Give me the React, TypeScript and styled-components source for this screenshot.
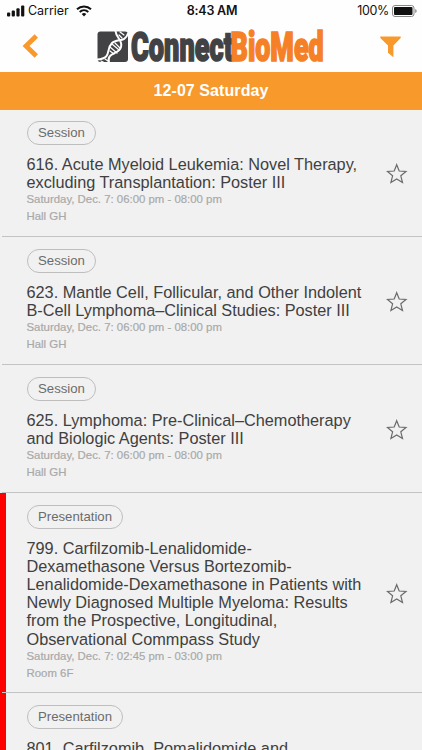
import React from 'react';
import styled, { createGlobalStyle } from 'styled-components';

const GlobalStyle = createGlobalStyle`
  * { box-sizing: border-box; }
  body { margin: 0; background: #f1f1f1; overflow: hidden; font-family: "Liberation Sans", Arial, sans-serif; }
`;
const Screen = styled.main`
  width: 422px; height: 750px; overflow: hidden; background: #f1f1f1;
`;
const StatusBar = styled.div`
  height: 22px; display: grid; grid-template-columns: 1fr auto 1fr; align-items: center;
  padding: 0 5px 0 7px; background: #fefefe; color: #111;
  font: 12.5px/22px Inter, sans-serif;
`;
const StatusLeft = styled.div`
  display: flex; align-items: center; gap: 3px; letter-spacing: -0.05px;
`;
const StatusRight = styled(StatusLeft)`
  justify-content: flex-end; letter-spacing: -0.35px;
`;
const Clock = styled.time`
  font-weight: 600; font-size: 12.5px; letter-spacing: -0.2px;
`;
const Wifi = styled.svg`margin-left: 4px;`;
const Header = styled.header`
  height: 50px; display: flex; align-items: center; background: #fefefe;
  padding: 0 20px 2px 22px;
`;
const HeaderButton = styled.button`
  border: 0; padding: 0; background: none; width: 22px; height: 30px; display: flex; align-items: center;
`;
const Logo = styled.svg`margin: 0 auto 0 51px; display: block; overflow: visible;`;
const DateBar = styled.div`
  height: 37px; background: #f8992b; color: #fff; box-shadow: 0 1px #c3a57e; position: relative; z-index: 1;
  text-align: center; font-size: 16px; font-weight: 700; line-height: 37px; letter-spacing: 0.08px;
`;
const Row = styled.article<{ $marked?: boolean; $height: number }>`
  height: ${p => p.$height}px; display: flex; align-items: center; position: relative;
  padding: 0 14px 0 26.5px;
  &::before {
    content: ''; position: absolute; left: 0; top: 0; bottom: 0; width: 6.4px;
    background: ${p => (p.$marked ? '#fe0000' : 'transparent')};
  }
  &::after {
    content: ''; position: absolute; left: 2px; right: 0; bottom: 0; height: 1px; background: #c3c3c3;
  }
`;
const Body = styled.div`
  flex: 1; align-self: stretch; padding-top: 12px; white-space: nowrap;
`;
const Tag = styled.span<{ $wide: boolean }>`
  display: flex; justify-content: center; align-items: center; margin-left: 0.5px;
  width: ${p => (p.$wide ? 96 : 69)}px; height: 23.5px; border: 1px solid #bebebe; border-radius: 12px;
  color: #6c6c6c; font-size: 13.2px;
`;
const Title = styled.h2`
  margin: 10.1px 0 0; font-size: 16.3px; line-height: 18.2px; font-weight: 400; color: #404040;
`;
const Line = styled.span`
  display: block;
`;
const Meta = styled.div`
  font-size: 11.4px; line-height: 17.2px; color: #a9a9a9;
  -webkit-text-stroke: 0.2px #a9a9a9;
`;
const StarButton = styled.button`
  border: 0; background: none; padding: 0; width: 22px; height: 22px; display: flex; margin-top: 1px;
`;

const Star = () => (
  <StarButton aria-label="Favorite">
    <svg width="22" height="22" viewBox="0 0 22 22" fill="none" stroke="#6a6a6a" strokeWidth="1.2">
      <path d="M10.7 1.7 13.2 8 20 8.5 14.8 12.8 16.5 19.5 10.7 15.9 4.9 19.5 6.6 12.8 1.4 8.5 8.2 8Z" />
    </svg>
  </StarButton>
);

const BrandLogo = () => (
  <Logo width="230" height="36" viewBox="0 0 230 36" role="img" aria-label="ConnectBioMed">
    <rect x="2.5" y="3.5" width="30.5" height="30.5" rx="3" fill="#424244" />
    <g fill="none" stroke="#fefefe" strokeLinecap="round">
      <path d="M33 5.5C30 15 22 10 17 15C10 22 18 30 2 31.5" strokeWidth="2" />
      <path d="M20.5 3C21 10 28 12 26 19C24 27 11 24 14 35" strokeWidth="2" />
      <path d="m25 4 4 3m-5 0 3 3M20 15l5 5m-8-4 7 6m-9-3 7 6m-7-2 4 3" strokeWidth="1.2" />
      <path d="m6 33 4 2m0-4 3 2" strokeWidth="1.1" />
    </g>
    <text y="33.4" fontFamily="Roboto, sans-serif" fontWeight="900" fontSize="41" strokeWidth="1.7" strokeLinejoin="miter">
      <tspan x="36" fill="#424244" stroke="#424244" textLength="102" lengthAdjust="spacingAndGlyphs">Connect</tspan>
      <tspan x="135.6" fill="#f58026" stroke="#f58026" textLength="93" lengthAdjust="spacingAndGlyphs">BioMed</tspan>
    </text>
  </Logo>
);

type Item = { tag: string; lines: string[]; time: string; room: string; height: number; marked?: boolean };
const EVENING = 'Saturday, Dec. 7: 06:00 pm - 08:00 pm';
const items: Item[] = [
  { tag: 'Session', lines: ['616. Acute Myeloid Leukemia: Novel Therapy,', 'excluding Transplantation: Poster III'], time: EVENING, room: 'Hall GH', height: 128 },
  { tag: 'Session', lines: ['623. Mantle Cell, Follicular, and Other Indolent', 'B-Cell Lymphoma–Clinical Studies: Poster III'], time: EVENING, room: 'Hall GH', height: 128 },
  { tag: 'Session', lines: ['625. Lymphoma: Pre-Clinical–Chemotherapy', 'and Biologic Agents: Poster III'], time: EVENING, room: 'Hall GH', height: 128 },
  {
    tag: 'Presentation', marked: true,
    lines: [
      '799. Carfilzomib-Lenalidomide-', 'Dexamethasone Versus Bortezomib-', 'Lenalidomide-Dexamethasone in Patients with',
      'Newly Diagnosed Multiple Myeloma: Results', 'from the Prospective, Longitudinal,', 'Observational Commpass Study',
    ],
    time: 'Saturday, Dec. 7: 02:45 pm - 03:00 pm', room: 'Room 6F', height: 200,
  },
  { tag: 'Presentation', marked: true, lines: ['801. Carfilzomib, Pomalidomide and'], time: '', room: '', height: 200 },
];

export default function App() {
  return (
    <Screen>
      <GlobalStyle />
      <StatusBar>
        <StatusLeft>
          <svg width="18" height="12" viewBox="0 0 18 12" fill="#111">
            <rect x="0" y="7.5" width="3.2" height="4" rx="1" /><rect x="4.7" y="5.5" width="3.2" height="6" rx="1" />
            <rect x="9.4" y="3.2" width="3.2" height="8.3" rx="1" /><rect x="14.1" y="0.5" width="3.2" height="11" rx="1" />
          </svg>
          <span>Carrier</span>
          <Wifi width="16" height="12" viewBox="0 0 16 12" fill="none" stroke="#111" strokeWidth="2">
            <path d="M1 4.2a10.2 10.2 0 0 1 14 0M3.7 7a6.4 6.4 0 0 1 8.6 0" /><path d="M5.7 9.1a3.5 3.5 0 0 1 4.6 0L8 11.5Z" fill="#111" stroke="none" />
          </Wifi>
        </StatusLeft>
        <Clock>8:43 AM</Clock>
        <StatusRight>
          <span>100%</span>
          <svg width="25" height="12" viewBox="0 0 25 12">
            <rect x="0.5" y="0.5" width="21.5" height="11" rx="2.5" fill="none" stroke="#888" />
            <rect x="2" y="2" width="18.5" height="8" rx="1" fill="#111" /><path d="M23.2 4v4q1.5-.7 1.5-2t-1.5-2" fill="#888" />
          </svg>
        </StatusRight>
      </StatusBar>
      <Header>
        <HeaderButton aria-label="Back">
          <svg width="18" height="26" viewBox="0 0 18 26" fill="none" stroke="#f8992b" strokeWidth="4.8"><path d="M14.3 3 4 13l10.3 10" /></svg>
        </HeaderButton>
        <BrandLogo />
        <HeaderButton aria-label="Filter">
          <svg width="22" height="24" viewBox="0 0 22 24" fill="#f8992b"><path d="M.3 2.6h20.4V4L13.4 11.5v11.7L8 18.8v-7.3L.3 4Z" /></svg>
        </HeaderButton>
      </Header>
      <DateBar>12-07 Saturday</DateBar>
      {items.map(item => (
        <Row key={item.lines[0]} $marked={item.marked} $height={item.height}>
          <Body>
            <Tag $wide={item.tag === 'Presentation'}>{item.tag}</Tag>
            <Title>{item.lines.map(text => <Line key={text}>{text}</Line>)}</Title>
            <Meta>{item.time}</Meta>
            <Meta>{item.room}</Meta>
          </Body>
          <Star />
        </Row>
      ))}
    </Screen>
  );
}
